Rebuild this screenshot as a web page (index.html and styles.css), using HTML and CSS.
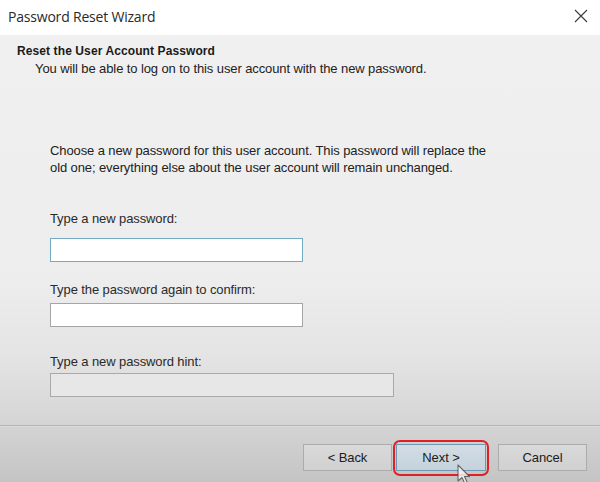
FILE: index.html
```html
<!DOCTYPE html>
<html>
<head>
<meta charset="utf-8">
<title>Password Reset Wizard</title>
<link rel="stylesheet" href="styles.css">
</head>
<body>
<div class="window">
  <div class="titlebar">
    <span class="title">Password Reset Wizard</span>
    <svg class="close" width="14" height="14" viewBox="0 0 14 14"><path d="M1 1 L13 13 M13 1 L1 13" stroke="#3a3a3a" stroke-width="1.1" fill="none"/></svg>
  </div>
  <div class="panel">
    <div class="header">
      <div class="h-title">Reset the User Account Password</div>
      <div class="h-sub">You will be able to log on to this user account with the new password.</div>
    </div>
    <div class="content">
      <p class="intro">Choose a new password for this user account. This password will replace the<br>old one; everything else about the user account will remain unchanged.</p>
      <div class="label l1">Type a new password:</div>
      <div class="field focused i1"></div>
      <div class="label l2">Type the password again to confirm:</div>
      <div class="field i2"></div>
      <div class="label l3">Type a new password hint:</div>
      <div class="field disabled i3"></div>
    </div>
    <div class="separator"></div>
    <div class="buttons">
      <div class="btn back">&lt; Back</div>
      <div class="btn next">Next &gt;</div>
      <div class="btn cancel">Cancel</div>
    </div>
  </div>
  <svg class="cursor" width="14" height="22" viewBox="0 0 14 22"><path d="M1 1 L1 17 L5 13.5 L8 20 L10.5 19 L7.5 12.5 L12.5 12.5 Z" fill="#f4f4f4" stroke="#555" stroke-width="1.1" stroke-linejoin="round"/></svg>
</div>
</body>
</html>
```

FILE: styles.css
```css
* { box-sizing: border-box; }
html, body { margin: 0; padding: 0; }
body {
  width: 600px;
  height: 482px;
  overflow: hidden;
  font-family: "Liberation Sans", Arial, sans-serif;
  font-size: 13px;
  letter-spacing: -0.1px;
  color: #1e1e1e;
}
.window {
  position: relative;
  width: 600px;
  height: 482px;
  display: flex;
  flex-direction: column;
}
.titlebar {
  height: 35px;
  background: #ffffff;
  display: flex;
  align-items: center;
  justify-content: space-between;
  padding: 0 12px 2px 8px;
  flex-shrink: 0;
}
.title {
  font-family: "Open Sans", "Noto Sans", sans-serif;
  font-size: 14px;
  color: #2a2a2a;
  letter-spacing: -0.2px;
}
.close { display: block; margin-bottom: 2px; }
.panel {
  flex: 1;
  background: linear-gradient(to bottom, #f0f0f0 0%, #ededed 55%, #e4e4e4 72%, #d8d8d8 84%, #cdcdcd 93%, #c4c4c4 100%);
  display: flex;
  flex-direction: column;
}
.header {
  padding: 8px 0 0 17px;
  line-height: 17px;
}
.h-title { font-weight: bold; color: #1a1a1a; font-size: 12px; letter-spacing: 0.1px; }
.h-sub { padding-left: 18px; color: #222; }
.content {
  padding-left: 50px;
  display: flex;
  flex-direction: column;
  align-items: flex-start;
}
.intro {
  margin: 65px 0 0 0;
  line-height: 17px;
  color: #222;
}
.label {
  line-height: 17px;
  color: #2a2a2a;
}
.l1 { margin-top: 34px; }
.l2 { margin-top: 19px; }
.l3 { margin-top: 26px; }
.field {
  height: 24px;
  width: 253px;
  background: #ffffff;
  border: 1px solid #a5a5a5;
}
.i1 { margin-top: 11px; }
.i2 { margin-top: 5px; }
.i3 { margin-top: 3px; width: 344px; }
.field.focused { border-color: #74aac3; }
.field.disabled { background: #e7e7e7; border-color: #a9a9a9; }
.separator {
  margin-top: 28px;
  height: 2px;
  border-top: 1px solid #b6b6b6;
  border-bottom: 1px solid #dcdcdc;
}
.buttons {
  margin-top: 17px;
  display: flex;
  justify-content: flex-end;
  padding-right: 13px;
}
.btn {
  height: 27px;
  width: 89px;
  display: flex;
  align-items: center;
  justify-content: center;
  border: 1px solid #acacac;
  background: linear-gradient(to bottom, #d9d9d9, #d1d1d1);
  color: #202020;
  font-size: 13px;
}
.back { margin-right: 4px; }
.next {
  position: relative;
  width: 90px;
  margin-right: 12px;
  background: linear-gradient(to bottom, #d2dde6, #c5d2dc);
  border-color: #6f98b3;
}
.next::after {
  content: "";
  position: absolute;
  left: -4px;
  right: -4px;
  top: -5px;
  bottom: -6px;
  border: 2.5px solid #dd2127;
  border-radius: 7px;
}
.cursor {
  position: absolute;
  left: 457px;
  top: 464px;
  opacity: 0.85;
}
```
